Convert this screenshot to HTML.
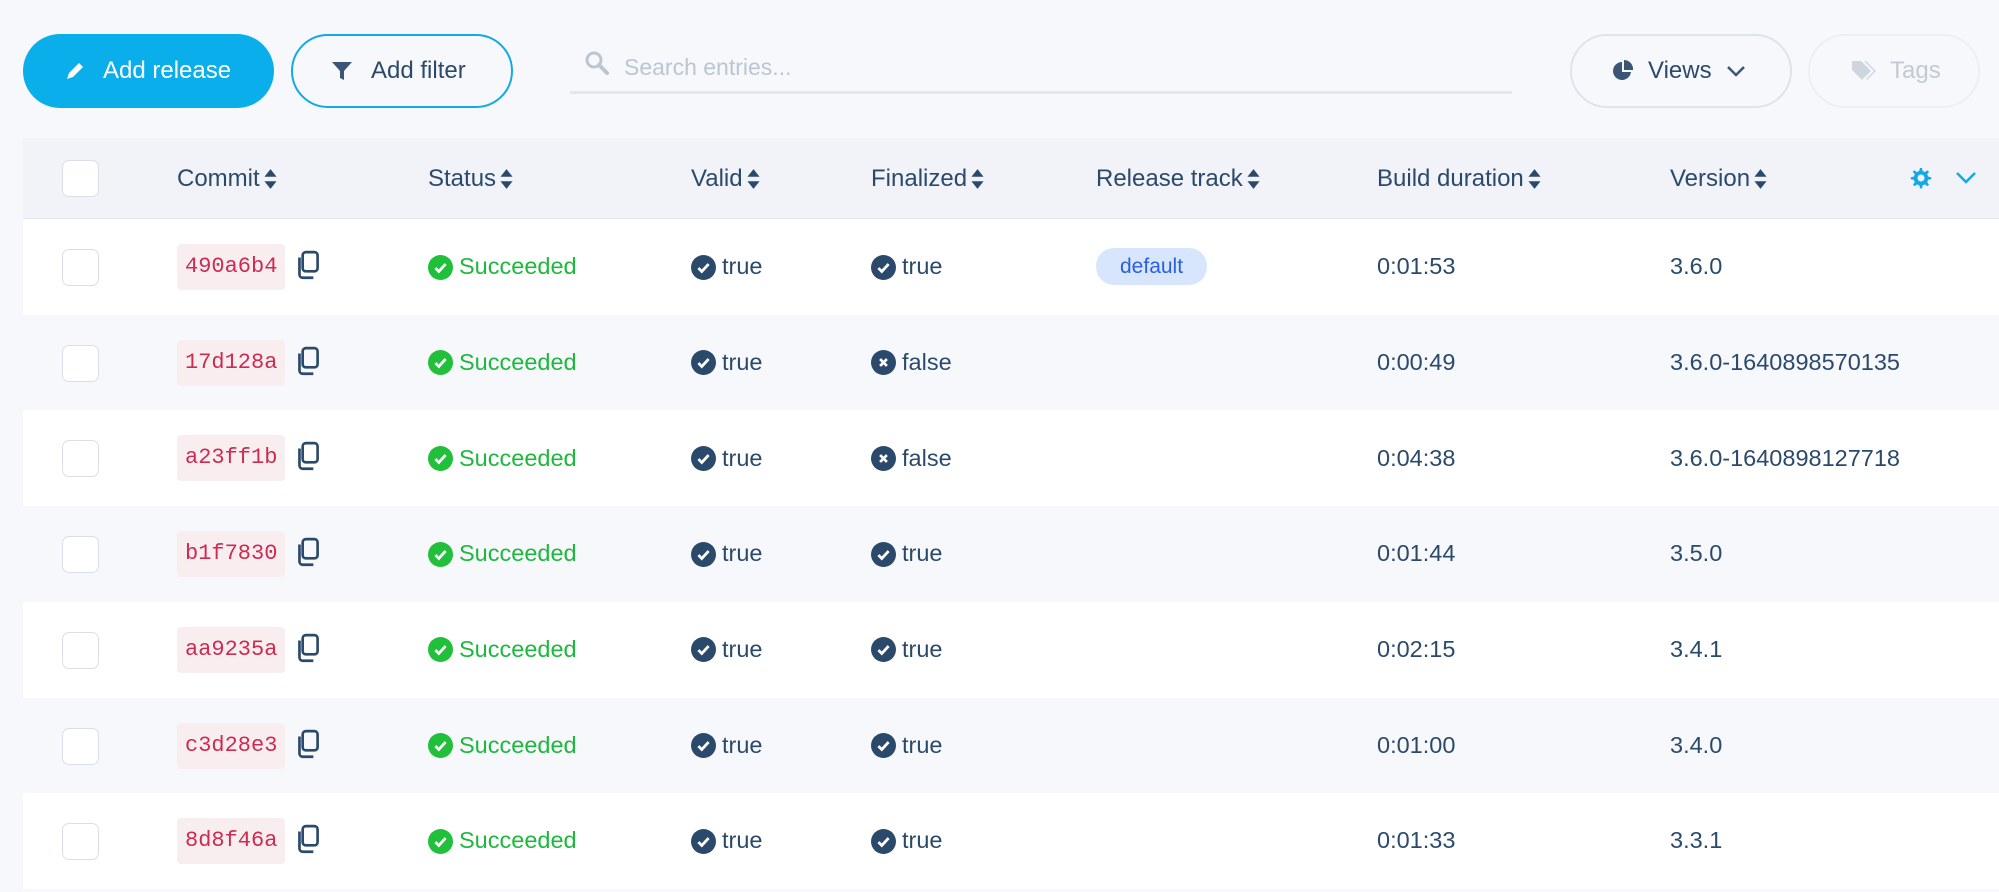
<!DOCTYPE html>
<html><head><meta charset="utf-8"><style>
body{margin:0;width:1999px;height:892px;background:#f7f8fc;font-family:"Liberation Sans",sans-serif;color:#2b4a6b;overflow:hidden;position:relative}
.a{position:absolute}
.btn{position:absolute;top:34px;height:74px;border-radius:37px;box-sizing:border-box;display:flex;align-items:center;font-size:24px}
.hdr{position:absolute;left:23px;top:138px;width:1976px;height:80px;background:#f1f3f8;border-bottom:2px solid #e3e7f0}
.row{position:absolute;left:23px;width:1976px;height:96px}
.cb{position:absolute;left:39px;width:37px;height:37px;border:1.5px solid #d9dfea;border-radius:7px;background:#fff;box-sizing:border-box}
.t{position:absolute;font-size:23.5px;white-space:nowrap;line-height:1;display:flex;align-items:center;height:26px}
.sort{display:inline-block;margin-left:3px}
.code{position:absolute;left:154px;height:46px;padding:0 8px;background:#f8eef0;border-radius:4px;font-family:"Liberation Mono",monospace;font-size:22px;color:#cf2a52;line-height:46px}
.ic{display:inline-block;width:25px;height:25px;border-radius:50%;margin-right:6px;position:relative;flex:none}
</style></head><body>
<div class="btn" style="left:23px;width:251px;background:#0aaeea;color:#fff;padding-left:40px">
<svg width="24" height="24" viewBox="0 0 24 24" style="margin-right:16px"><path d="M4 20l2-6L16 4l4 4L10 18z" fill="#fff"/></svg>Add release</div>
<div class="btn" style="left:291px;width:222px;border:2px solid #13a9e6;color:#2b4a6b;padding-left:38px">
<svg width="22" height="22" viewBox="0 0 22 22" style="margin-right:18px"><path d="M1 2h20l-8 9v9l-4-2v-7z" fill="#3b5675"/></svg>Add filter</div>
<svg class="a" style="left:584px;top:50px" width="26" height="26" viewBox="0 0 26 26"><circle cx="10" cy="10" r="7" fill="none" stroke="#bcc6d3" stroke-width="3"/><path d="M15 15l8 8" stroke="#bcc6d3" stroke-width="4" stroke-linecap="round"/></svg>
<div class="t" style="left:624px;top:54px;color:#bcc6d3;font-size:23px">Search entries...</div>
<div class="a" style="left:570px;top:91px;width:942px;height:3px;background:#e3e6ee"></div>
<div class="btn" style="left:1570px;width:222px;border:2px solid #dfe3ec;padding-left:40px">
<svg width="22" height="22" viewBox="0 0 22 22" style="margin-right:14px"><path d="M10 2A9 9 0 1 0 19 12H10z" fill="#3b5675"/><path d="M12 0v10h9A9 9 0 0 0 12 0z" fill="#3b5675"/></svg>Views
<svg width="20" height="14" viewBox="0 0 20 14" style="margin-left:14px"><path d="M2 3l8 8 8-8" fill="none" stroke="#3b5675" stroke-width="2.5"/></svg></div>
<div class="btn" style="left:1808px;width:172px;border:2px solid #eceff4;color:#c3cad5;padding-left:40px">
<svg width="26" height="24" viewBox="0 0 26 24" style="margin-right:14px"><path d="M2 2h9l10 10-9 9L2 11z" fill="#cfd5de"/><path d="M14 2h2l10 10-9 9-1-1 8-8z" fill="#cfd5de"/></svg>Tags</div>

<div class="hdr">
<div class="cb" style="top:22px"></div>
</div>
<div id="h"></div>
<script>
const S='<svg class="sort" width="15" height="22" viewBox="0 0 13 20"><path d="M6.5 1L12 8H1z M6.5 19L12 12H1z" fill="#2b4a6b"/></svg>';
const H=[["Commit",177],["Status",428],["Valid",691],["Finalized",871],["Release track",1096],["Build duration",1377],["Version",1670]];
let o='';
H.forEach(h=>{o+=`<div class="t" style="left:${h[1]}px;top:166px;font-size:24px">${h[0]}${S}</div>`});
o+=`<svg class="a" style="left:1908px;top:166px" width="24" height="24" viewBox="0 0 24 24"><path d="M12 2l2 0 .6 3 2.4 1 2.5-1.8 1.5 1.5L19.2 8.2l1 2.4 3 .6v2l-3 .6-1 2.4 1.8 2.5-1.5 1.5-2.5-1.8-2.4 1-.6 3h-2l-.6-3-2.4-1-2.5 1.8-1.5-1.5 1.8-2.5-1-2.4-3-.6v-2l3-.6 1-2.4L4.7 5.7l1.5-1.5L8.7 6l2.4-1z" fill="#13a9e6"/><circle cx="13" cy="12" r="3.5" fill="#f1f3f8"/></svg>
<svg class="a" style="left:1955px;top:170px" width="22" height="16" viewBox="0 0 22 16"><path d="M2 3l9 9 9-9" fill="none" stroke="#13a9e6" stroke-width="2.5"/></svg>`;
const R=[["490a6b4",1,"0:01:53","3.6.0",1],["17d128a",0,"0:00:49","3.6.0-1640898570135"],["a23ff1b",0,"0:04:38","3.6.0-1640898127718"],["b1f7830",1,"0:01:44","3.5.0"],["aa9235a",1,"0:02:15","3.4.1"],["c3d28e3",1,"0:01:00","3.4.0"],["8d8f46a",1,"0:01:33","3.3.1"]];
const chk=c=>`<span class="ic" style="background:${c}"><svg width="25" height="25" viewBox="0 0 22 22" style="position:absolute;left:0;top:0"><path d="M6.5 11.5l3 3 6-6.5" fill="none" stroke="#fff" stroke-width="2.4"/></svg></span>`;
const xx=`<span class="ic" style="background:#2b4a6b"><svg width="25" height="25" viewBox="0 0 22 22" style="position:absolute;left:0;top:0"><path d="M8 8l6 6M14 8l-6 6" stroke="#fff" stroke-width="2.4"/></svg></span>`;
R.forEach((r,i)=>{const y=219+i*95.7;const c=y+48;
o+=`<div class="row" style="top:${y}px;background:${i%2?'transparent':'#fff'}"></div>`;
o+=`<div class="cb" style="top:${c-18}px;left:62px"></div>`;
o+=`<div class="code" style="top:${c-23}px;left:177px">${r[0]}</div>`;
o+=`<svg class="a" style="left:294px;top:${c-17}px" width="28" height="32" viewBox="0 0 26 30"><rect x="8" y="2" width="14" height="18" rx="3" fill="none" stroke="#2b4a6b" stroke-width="2.5"/><path d="M5 7v16a3 3 0 0 0 3 3h10" fill="none" stroke="#2b4a6b" stroke-width="2.5"/></svg>`;
o+=`<div class="t" style="left:428px;top:${c-13}px;color:#1fb83e">${chk('#20c03a')}Succeeded</div>`;
o+=`<div class="t" style="left:691px;top:${c-13}px">${chk('#2b4a6b')}true</div>`;
o+=`<div class="t" style="left:871px;top:${c-13}px">${r[1]?chk('#2b4a6b')+'true':xx+'false'}</div>`;
if(r[4])o+=`<div class="t" style="left:1096px;top:${c-19}px;height:37px;padding:0 24px;background:#d8e6fd;color:#2a5fe0;border-radius:18px;font-size:21px">default</div>`;
o+=`<div class="t" style="left:1377px;top:${c-13}px">${r[2]}</div>`;
o+=`<div class="t" style="left:1670px;top:${c-13}px">${r[3]}</div>`;
});
document.getElementById('h').outerHTML=o;
</script>
</body></html>
